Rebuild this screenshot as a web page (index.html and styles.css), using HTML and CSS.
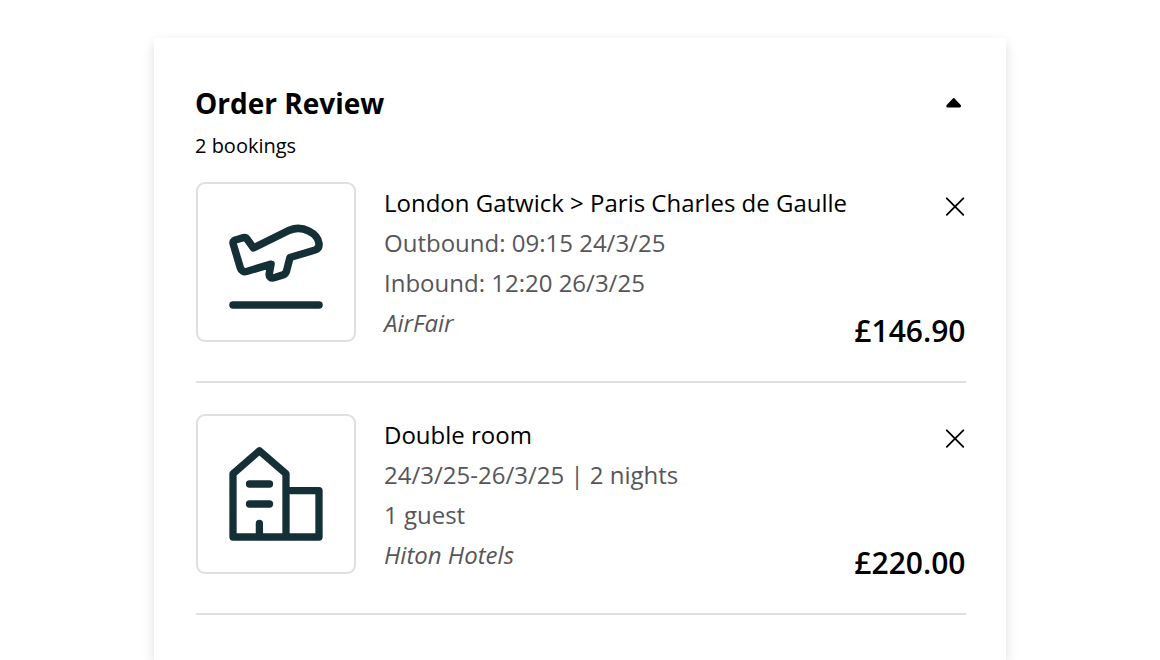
FILE: index.html
```html
<!DOCTYPE html>
<html lang="en">

<head>
    <meta charset="UTF-8">
    <meta name="viewport" content="width=device-width, initial-scale=1.0">
    <title>Order Review</title>
    <link rel="stylesheet" href="styles.css">
</head>

<body>
    <main class="order">
        <header class="order-header">
            <h1 class="order-title">Order Review</h1>
            <button class="toggle" type="button" aria-label="Collapse">
                <svg width="16" height="12" viewBox="0 0 16 12"><path d="M1.800 9 7.700 2.700 13.600 9z" fill="#000" stroke="#000" stroke-width="3" stroke-linejoin="round"/></svg>
            </button>
        </header>
        <p class="order-count">2 bookings</p>

        <section class="booking">
            <div class="thumb">
                <svg width="96" height="96" viewBox="0 0 96 96" fill="none" stroke="#152f36" stroke-width="7.500" stroke-linecap="round" stroke-linejoin="round">
                    <path d="M5.200 30C4.600 28 5.600 26.500 7.500 26L15.500 23.700C17 23.300 18.200 23.800 19 25L25.500 34 61.500 16.200C75 10.500 90 20 91 29.500 91.300 32.500 90 35 87 36L62 43.500 58.500 57C58 59 57 60.200 55 60.900L46 63.800C43 64.700 40.800 63 41.200 60L43 50.200 18.500 57.500C15.500 58.300 13.300 56.800 12.400 54z"/>
                    <path d="M5 91h86"/>
                </svg>
            </div>
            <div class="details">
                <h2 class="name">London Gatwick &gt; Paris Charles de Gaulle</h2>
                <p class="info">Outbound: 09:15 24/3/25</p>
                <p class="info">Inbound: 12:20 26/3/25</p>
                <p class="info supplier">AirFair</p>
            </div>
            <div class="side">
                <button class="remove" type="button" aria-label="Remove">
                    <svg width="20" height="20" viewBox="0 0 20 20"><path d="M1.800 1.300l16.500 16.500m0-16.500l-16.500 16.500" stroke="#000" stroke-width="1.800" stroke-linecap="round"/></svg>
                </button>
                <p class="price">£146.90</p>
            </div>
        </section>

        <section class="booking">
            <div class="thumb">
                <svg width="96" height="96" viewBox="0 0 96 96" fill="none" stroke="#152f36" stroke-width="7.300" stroke-linecap="round" stroke-linejoin="round">
                    <path d="M5 91V27.700L31.400 4.800 58 27.700V91zM58 44.700h33V91H58M31.400 91V77.500M21.500 38h20M21.500 58h20"/>
                </svg>
            </div>
            <div class="details">
                <h2 class="name">Double room</h2>
                <p class="info">24/3/25-26/3/25 | 2 nights</p>
                <p class="info">1 guest</p>
                <p class="info supplier">Hiton Hotels</p>
            </div>
            <div class="side">
                <button class="remove" type="button" aria-label="Remove">
                    <svg width="20" height="20" viewBox="0 0 20 20"><path d="M1.800 1.300l16.500 16.500m0-16.500l-16.500 16.500" stroke="#000" stroke-width="1.800" stroke-linecap="round"/></svg>
                </button>
                <p class="price">£220.00</p>
            </div>
        </section>
    </main>
</body>

</html>
```
FILE: styles.css
```css
* {
    box-sizing: border-box;
    margin: 0;
}
body {
    height: 660px;
    padding-top: 38px;
    overflow: hidden;
    background-color: #fff;
    color: #000;
    font-family: "Open Sans", sans-serif;
}
button {
    display: flex;
    padding: 0;
    border: 0;
    background: none;
    cursor: pointer;
}
.order {
    width: 852px; height: 622px;
    margin: 0 auto;
    padding: 45px 40px 0 42px;
    box-shadow: 0 5px 12px rgba(0, 0, 0, 0.13);
}
.order-header {
    display: flex;
    align-items: center;
    justify-content: space-between;
    height: 40px;
    margin-left: -1px;
}
.order-title {
    font-size: 28px; line-height: 40px;
    font-weight: 700;
}
.toggle {
    margin-right: 4px;
}
.order-count {
    margin: 9px 0 22px -1px;
    font-size: 20px; line-height: 28px;
}
/* booking rows */
.booking {
    display: flex;
    height: 201px;
    margin-bottom: 31px;
    border-bottom: 2px solid #dfdfdf;
}
.thumb {
    display: flex;
    align-items: center;
    justify-content: center;
    width: 160px; height: 160px;
    border: 2px solid #dfdfdf;
    border-radius: 9px;
}
.thumb svg {
    flex: none;
}
.details {
    flex: 1;
    padding: 1px 0 0 28px;
}
.name, .info {
    font-size: 24px; line-height: 40px;
    font-weight: 400;
    white-space: nowrap;
}
.info {
    color: #56565a;
}
.supplier {
    font-style: italic;
}
.side {
    display: flex;
    flex-direction: column;
    align-items: flex-end;
    justify-content: space-between;
    height: 169px;
    padding-top: 15px;
}
.remove {
    margin-right: 1px;
}
.price {
    margin-right: 0.5px;
    font-size: 30px; line-height: 40px;
    font-weight: 600;
}
```
